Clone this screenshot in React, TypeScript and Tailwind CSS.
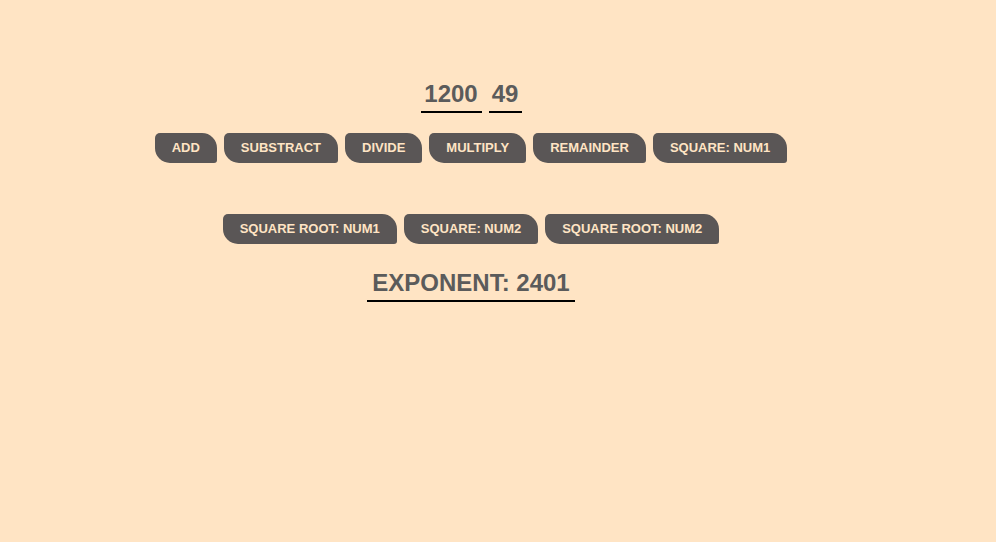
const buttons = [
  "ADD",
  "SUBSTRACT",
  "DIVIDE",
  "MULTIPLY",
  "REMAINDER",
  "SQUARE: NUM1",
  "SQUARE ROOT: NUM1",
  "SQUARE: NUM2",
  "SQUARE ROOT: NUM2",
];

function App() {
  return (
    <div className="min-h-[542px] bg-[#ffe4c4] font-['Liberation_Sans',Arial,sans-serif]">
      <div className="w-[942px] flex flex-col items-center">
        <div className="mt-[80px] flex gap-[7px]">
          <div className="w-[61px] text-center text-[24px] leading-[27px] font-bold text-[#5b5b5b] pb-[4px] border-b-2 border-black">
            1200
          </div>
          <div className="w-[33px] text-center text-[24px] leading-[27px] font-bold text-[#5b5b5b] pb-[4px] border-b-2 border-black">
            49
          </div>
        </div>
        <div className="mt-[20px] w-[700px] flex flex-wrap justify-center gap-x-[7px] gap-y-[51px]">
          {buttons.map((b) => (
            <button
              key={b}
              className="h-[30px] px-[17px] bg-[#5a5656] text-[#ffe4c4] text-[13px] font-bold rounded-[5px_15px_3px_15px]"
            >
              {b}
            </button>
          ))}
        </div>
        <div className="mt-[25px] px-[5px] text-[24px] leading-[27px] font-bold text-[#5b5b5b] pb-[4px] border-b-2 border-black">
          EXPONENT: 2401
        </div>
      </div>
    </div>
  );
}

export default App;
